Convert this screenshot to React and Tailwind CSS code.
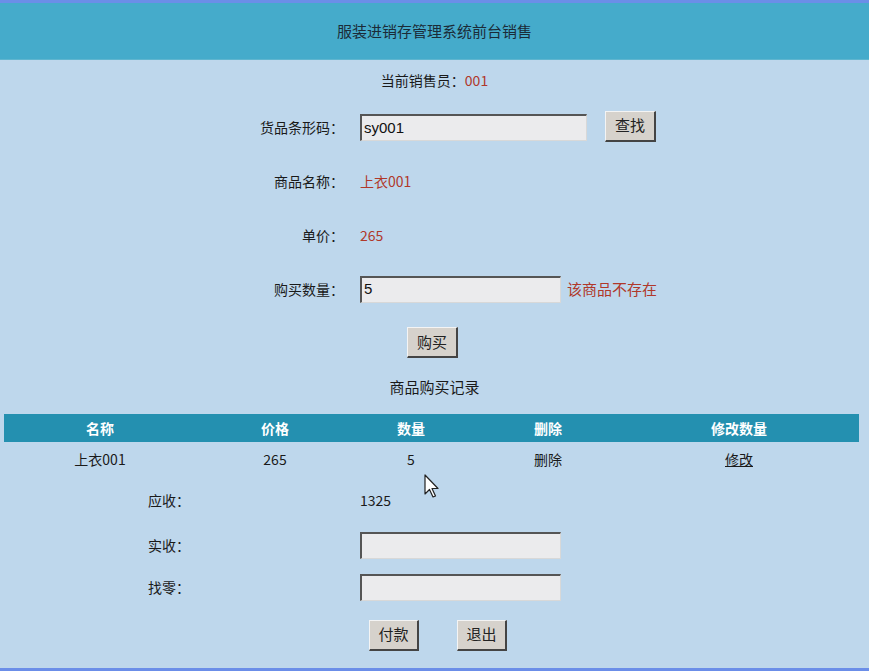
import React from "react";

const font = { fontFamily: '"Noto Sans CJK SC", "Liberation Sans", sans-serif' };

function Input({ value, w }) {
  return (
    <div
      className={`h-[27px] ${w} bg-[#ebebed] border-t-2 border-l-2 border-b border-r border-t-[#555] border-l-[#555] border-b-[#d8d8d8] border-r-[#d8d8d8] flex items-center pl-[2px] text-[15px] text-[#111]`}
      style={{ fontFamily: '"Liberation Sans", sans-serif' }}
    >
      {value}
    </div>
  );
}

function Btn({ children, w = "w-[51px]" }) {
  return (
    <div className={`h-[31px] ${w} bg-[#d6d2cc] border-t border-l border-b-2 border-r-2 border-t-[#f4f4f4] border-l-[#f4f4f4] border-b-[#444] border-r-[#444] flex items-center justify-center text-[15px] text-[#222]`}>
      {children}
    </div>
  );
}

export default function App() {
  const cols = ["w-[192px]", "w-[158px]", "w-[114px]", "w-[160px]", "w-[222px]"];
  const heads = ["名称", "价格", "数量", "删除", "修改数量"];
  return (
    <div className="w-[869px] h-[671px] relative overflow-hidden bg-[#bed7ec] text-[14px] text-[#1a1a1a]" style={font}>
      <div className="h-[3px] bg-[#6b8ee8]" />
      <div className="h-[57px] bg-[#45abcb] flex items-center justify-center text-[15px] text-[#1b2b38] border-b border-b-[#5fb5cf]">
        服装进销存管理系统前台销售
      </div>

      <div className="h-[40px] flex items-center justify-center">
        当前销售员：<span className="text-[#b0382a]">001</span>
      </div>

      <div className="h-[55px] flex items-center">
        <div className="w-[344px] text-right">货品条形码：</div>
        <div className="ml-[16px] flex items-center">
          <Input value="sy001" w="w-[227px]" />
          <div className="ml-[18px] -mt-[3px]"><Btn>查找</Btn></div>
        </div>
      </div>

      <div className="h-[53px] flex items-center">
        <div className="w-[344px] text-right">商品名称：</div>
        <div className="ml-[16px] text-[#b0382a]">上衣001</div>
      </div>

      <div className="h-[54px] flex items-center">
        <div className="w-[344px] text-right">单价：</div>
        <div className="ml-[16px] text-[#b0382a]">265</div>
      </div>

      <div className="h-[54px] flex items-center">
        <div className="w-[344px] text-right">购买数量：</div>
        <div className="ml-[16px] flex items-center">
          <Input value="5" w="w-[201px]" />
          <span className="ml-[6px] text-[15px] text-[#b0382a]">该商品不存在</span>
        </div>
      </div>

      <div className="h-[53px] flex items-center pl-[407px]">
        <Btn>购买</Btn>
      </div>

      <div className="h-[36px] flex items-center justify-center text-[15px]">商品购买记录</div>

      <div className="mt-[9px] mx-[4px] w-[855px] h-[28px] bg-[#2490b0] flex items-center text-white font-bold">
        {heads.map((h, i) => (
          <div key={h} className={`${cols[i]} text-center`}>{h}</div>
        ))}
      </div>
      <div className="mx-[4px] h-[34px] flex items-center">
        <div className={`${cols[0]} text-center`}>上衣001</div>
        <div className={`${cols[1]} text-center`}>265</div>
        <div className={`${cols[2]} text-center`}>5</div>
        <div className={`${cols[3]} text-center`}>删除</div>
        <div className={`${cols[4]} text-center`}><span className="underline">修改</span></div>
      </div>

      <div className="h-[48px] flex items-center">
        <div className="w-[360px] pl-[148px]">应收：</div>
        <div className="text-[14px]">1325</div>
      </div>
      <div className="h-[42px] flex items-center">
        <div className="w-[360px] pl-[148px]">实收：</div>
        <Input value="" w="w-[201px]" />
      </div>
      <div className="h-[42px] flex items-center">
        <div className="w-[360px] pl-[148px]">找零：</div>
        <Input value="" w="w-[201px]" />
      </div>

      <div className="h-[54px] flex items-center pl-[369px] gap-[38px]">
        <Btn w="w-[50px]">付款</Btn>
        <Btn w="w-[50px]">退出</Btn>
      </div>

      <div className="absolute left-0 right-0 bottom-0 h-[3px] bg-[#6b8ee8]" />

      <svg className="absolute left-[424px] top-[474px]" width="16" height="26" viewBox="0 0 16 26">
        <path d="M1 1 L1 20 L5.5 15.5 L9 23 L11.5 22 L8 14.5 L14 14.5 Z" fill="#fff" stroke="#222" strokeWidth="1.2" strokeLinejoin="round" />
      </svg>
    </div>
  );
}
